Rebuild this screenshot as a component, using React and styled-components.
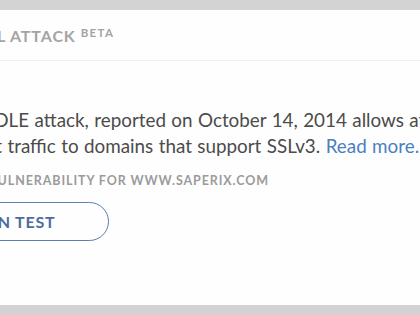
import React from 'react'
import styled, { createGlobalStyle } from 'styled-components'

const GlobalStyle = createGlobalStyle`
  html, body {
    margin: 0;
    padding: 0;
    background: #d3d3d3;
    overflow: hidden;
  }
  body {
    font-family: Lato, "Open Sans", sans-serif;
  }
`

const Page = styled.div`
  width: 420px;
  height: 315px;
  padding: 10px 0;
  box-sizing: border-box;
  overflow: hidden;
`

const Card = styled.section`
  width: 660px;
  height: 295px;
  margin-left: -98px;
  background: #fefefe;
  display: flex;
  flex-direction: column;
`

const Header = styled.header`
  height: 51px;
  display: flex;
  align-items: center;
  border-bottom: 1px solid #eef0f5;
  box-sizing: border-box;
`

const Title = styled.h2`
  margin: 0;
  font-size: 16px;
  font-weight: 700;
  letter-spacing: 0.9px;
  color: #a4a4a4;
  text-transform: uppercase;
`

const Beta = styled.sup`
  font-size: 11.5px;
  letter-spacing: 1.3px;
  margin-left: 5px;
  vertical-align: 5px;
`

const Body = styled.div`
  padding: 46px 0 0 14px;
  display: flex;
  flex-direction: column;
  align-items: flex-start;
`

const Lead = styled.p`
  margin: 0;
  font-size: 18.83px;
  line-height: 26px;
  word-spacing: 0.6px;
  color: #4b4b4b;
  white-space: nowrap;
`

const Link = styled.a`
  color: #4a7fc1;
  text-decoration: none;
`

const Caption = styled.div`
  margin: 14px 0 0 12px;
  font-size: 12.5px;
  font-weight: 700;
  letter-spacing: 0.9px;
  color: #9b9b9b;
  text-transform: uppercase;
`

const Button = styled.button`
  margin-top: 14px;
  height: 39px;
  padding: 0 53px 0 57px;
  border: 1.5px solid #5b7fb0;
  border-radius: 20px;
  background: transparent;
  font-family: Lato, "Open Sans", sans-serif;
  font-size: 16px;
  font-weight: 700;
  letter-spacing: 0.8px;
  color: #4c6c9d;
  text-transform: uppercase;
  cursor: pointer;
`

export default function App() {
  return (
    <Page>
      <GlobalStyle />
      <Card>
        <Header>
          <Title>
            Poodle SSL Attack<Beta>Beta</Beta>
          </Title>
        </Header>
        <Body>
          <Lead>
            The POODLE attack, reported on October 14, 2014 allows attackers
            <br />
            to decrypt traffic to domains that support SSLv3. <Link href="#">Read more.</Link>
          </Lead>
          <Caption>Poodle vulnerability for www.saperix.com</Caption>
          <Button>Run test</Button>
        </Body>
      </Card>
    </Page>
  )
}
